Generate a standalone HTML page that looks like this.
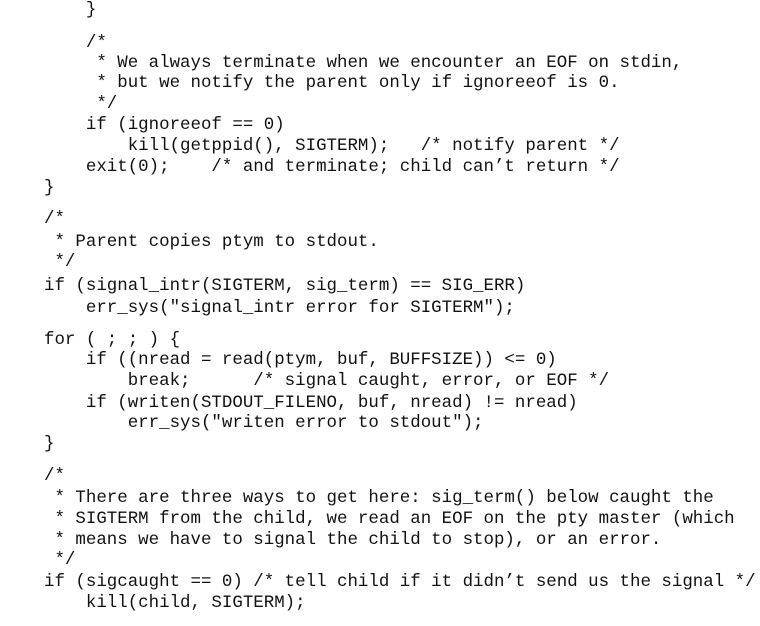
<!DOCTYPE html>
<html><head><meta charset="utf-8"><style>
html,body{margin:0;padding:0;background:#fff;width:760px;height:626px;overflow:hidden}
.l{position:absolute;left:44px;font-family:"Liberation Mono",monospace;font-size:17.45px;line-height:20px;color:#111;white-space:pre}
</style></head><body>
<div class="l" style="top:0px">    }</div>
<div class="l" style="top:33px">    /*</div>
<div class="l" style="top:53px">     * We always terminate when we encounter an EOF on stdin,</div>
<div class="l" style="top:73px">     * but we notify the parent only if ignoreeof is 0.</div>
<div class="l" style="top:94px">     */</div>
<div class="l" style="top:115px">    if (ignoreeof == 0)</div>
<div class="l" style="top:136px">        kill(getppid(), SIGTERM);   /* notify parent */</div>
<div class="l" style="top:157px">    exit(0);    /* and terminate; child can’t return */</div>
<div class="l" style="top:178px">}</div>
<div class="l" style="top:209px">/*</div>
<div class="l" style="top:232px"> * Parent copies ptym to stdout.</div>
<div class="l" style="top:252px"> */</div>
<div class="l" style="top:276px">if (signal_intr(SIGTERM, sig_term) == SIG_ERR)</div>
<div class="l" style="top:298px">    err_sys("signal_intr error for SIGTERM");</div>
<div class="l" style="top:330px">for ( ; ; ) {</div>
<div class="l" style="top:350px">    if ((nread = read(ptym, buf, BUFFSIZE)) &lt;= 0)</div>
<div class="l" style="top:371px">        break;      /* signal caught, error, or EOF */</div>
<div class="l" style="top:393px">    if (writen(STDOUT_FILENO, buf, nread) != nread)</div>
<div class="l" style="top:413px">        err_sys("writen error to stdout");</div>
<div class="l" style="top:434px">}</div>
<div class="l" style="top:466px">/*</div>
<div class="l" style="top:488px"> * There are three ways to get here: sig_term() below caught the</div>
<div class="l" style="top:509px"> * SIGTERM from the child, we read an EOF on the pty master (which</div>
<div class="l" style="top:530px"> * means we have to signal the child to stop), or an error.</div>
<div class="l" style="top:550px"> */</div>
<div class="l" style="top:572px">if (sigcaught == 0) /* tell child if it didn’t send us the signal */</div>
<div class="l" style="top:593px">    kill(child, SIGTERM);</div>
</body></html>
